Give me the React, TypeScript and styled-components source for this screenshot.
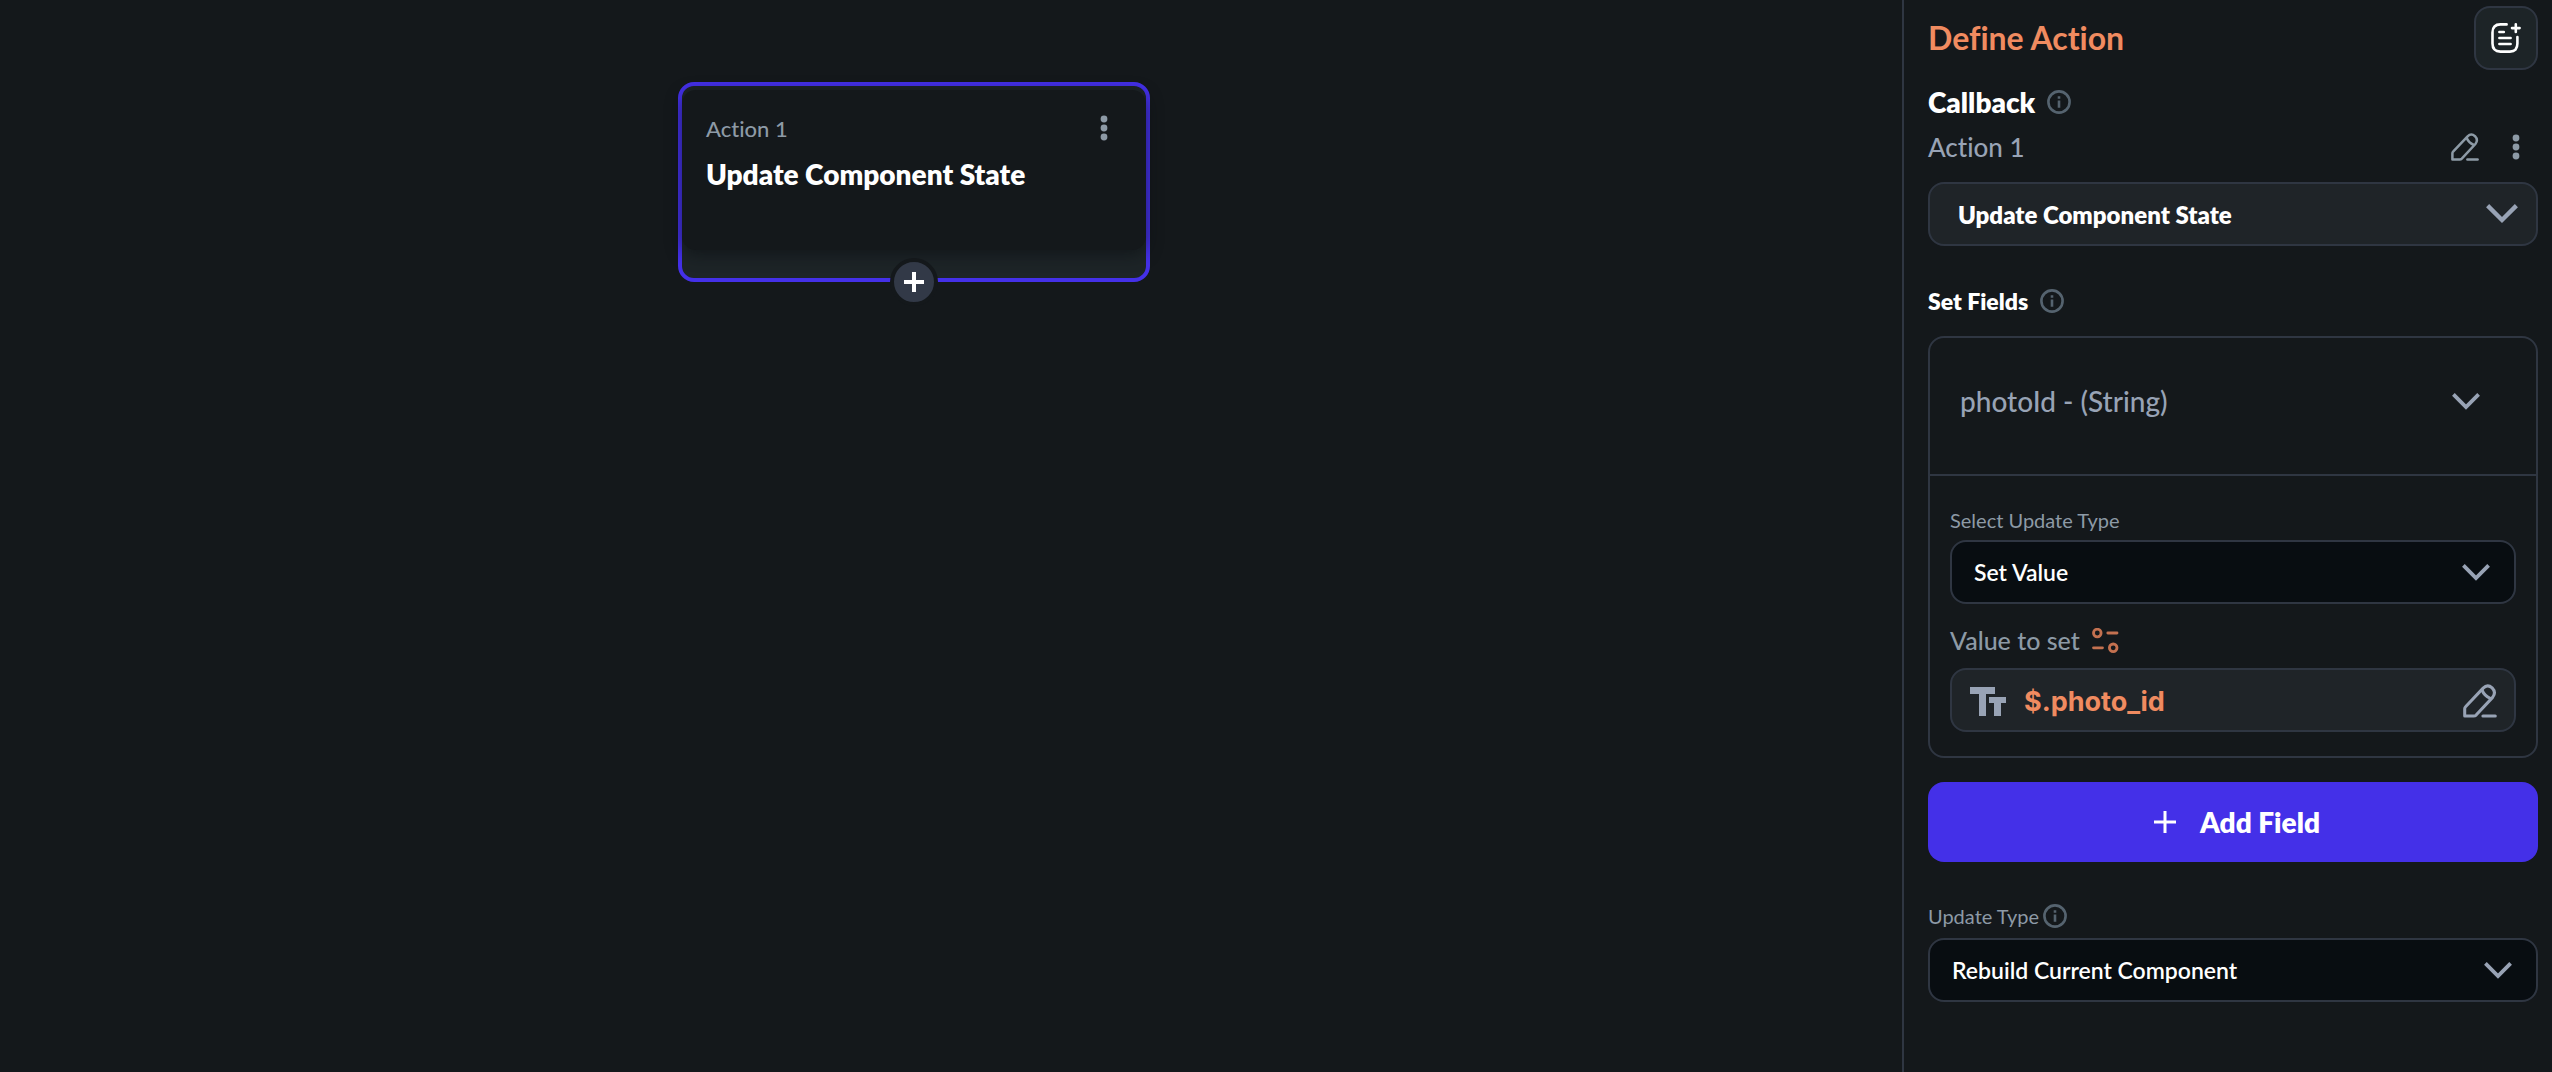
import React, { useState } from "react";
import styled, { createGlobalStyle } from "styled-components";

const color = {
  page: "#14181b",
  surface: "#1f2428",
  raised: "#1d2427",
  sunken: "#080d11",
  line: "#2f3642",
  white: "#ffffff",
  text: "#98a3b5",
  muted: "#8d9aa6",
  faint: "#55636f",
  purple: "#4430e8",
  orange: "#f08b60",
  rust: "#c47150",
};

const GlobalStyle = createGlobalStyle`
  * { box-sizing: border-box; }
  body {
    margin: 0;
    background: ${color.page};
    color: ${color.white};
    font-family: Lato, Roboto, sans-serif;
    font-variant-ligatures: none;
  }
  button, input, select { font-family: inherit; }
`;

const Layout = styled.div`
  display: flex;
  min-height: 100vh;
`;

const Canvas = styled.main`
  position: relative;
  flex: 1;
  min-width: 0;
`;

const Node = styled.article`
  position: absolute;
  left: 678px;
  top: 82px;
  width: 472px;
  height: 200px;
  padding-top: 4px;
  border: 4px solid ${color.purple};
  border-radius: 16px;
  background: ${color.raised};
`;

const NodeBody = styled.div`
  height: 160px;
  padding: 20px 24px;
  border-radius: 14px;
  background: ${color.page};
  box-shadow: 0 4px 16px rgba(10, 14, 17, 0.6);
`;

const Row = styled.div<{ $height: number; $gap?: number }>`
  display: flex;
  align-items: center;
  gap: ${(p) => p.$gap ?? 12}px;
  height: ${(p) => p.$height}px;
`;

const NodeHeader = styled(Row)`
  justify-content: space-between;
  padding-right: 14px;
`;

const NodeStep = styled.span`
  color: ${color.muted};
  font-size: 22px;
  font-weight: 500;
`;

const NodeTitle = styled.h3`
  margin: 8px 0 0;
  font-size: 28px;
  font-weight: 800;
  line-height: 40px;
`;

const NodeAdd = styled.button`
  position: absolute;
  left: 50%;
  bottom: -28px;
  display: grid;
  place-items: center;
  width: 48px;
  height: 48px;
  margin-left: -24px;
  padding: 0;
  border: 4px solid ${color.page};
  border-radius: 50%;
  background: #323947;
  color: ${color.white};
`;

const Panel = styled.aside`
  display: flex;
  flex-direction: column;
  width: 650px;
  padding: 6px 14px 24px 24px;
  border-left: 2px solid ${color.line};
`;

const PanelHeader = styled.header`
  display: flex;
  align-items: center;
  justify-content: space-between;
  margin-bottom: 16px;
`;

const PanelTitle = styled.h1`
  margin: 0;
  color: ${color.orange};
  font-size: 32px;
  font-weight: 700;
  line-height: 36px;
`;

const NotesButton = styled.button`
  display: grid;
  place-items: center;
  width: 64px;
  height: 64px;
  padding: 0;
  border: 2px solid ${color.line};
  border-radius: 16px;
  background: ${color.raised};
  color: ${color.white};
`;

const Heading = styled.h2<{ $size: number; $weight: number }>`
  margin: 0;
  font-size: ${(p) => p.$size}px;
  font-weight: ${(p) => p.$weight};
`;

const ActionRow = styled(Row)`
  justify-content: space-between;
  margin: 12px 0 18px;
`;

const ActionName = styled.span`
  color: ${color.text};
  font-size: 26px;
  font-weight: 500;
`;

const ActionTools = styled.div`
  display: flex;
  align-items: center;
  gap: 33px;
  padding-right: 18px;
`;

const IconButton = styled.button`
  display: grid;
  place-items: center;
  padding: 0;
  border: 0;
  background: none;
  color: ${color.muted};
`;

const ValueEdit = styled(IconButton)`
  color: ${color.text};
`;

const SectionRow = styled(Row)`
  margin: 40px 0 20px;
`;

const Field = styled.div`
  position: relative;
  display: flex;
  align-items: center;
`;

type Tone = "surface" | "sunken" | "plain";

const Select = styled.select<{ $tone: Tone; $size: number; $weight: number; $inset: number }>`
  appearance: none;
  width: 100%;
  height: 64px;
  padding: 0 60px 0 ${(p) => p.$inset}px;
  border: ${(p) => (p.$tone === "plain" ? "0" : `2px solid ${color.line}`)};
  border-radius: 16px;
  background: ${(p) => (p.$tone === "plain" ? "transparent" : color[p.$tone])};
  color: ${(p) => (p.$tone === "plain" ? color.text : color.white)};
  font-size: ${(p) => p.$size}px;
  font-weight: ${(p) => p.$weight};
`;

const Chevron = styled.svg<{ $right: number }>`
  position: absolute;
  right: ${(p) => p.$right}px;
  color: ${color.text};
  pointer-events: none;
`;

const FieldCard = styled.section`
  border: 2px solid ${color.line};
  border-radius: 16px;
`;

const FieldCardHead = styled.div`
  padding: 31px 0 41px;
  border-bottom: 2px solid ${color.line};
`;

const FieldCardBody = styled.div`
  padding: 32px 20px 24px;
`;

const SmallLabel = styled.label`
  display: block;
  color: ${color.muted};
  font-size: 20px;
  line-height: 24px;
`;

const TypeLabel = styled(SmallLabel)`
  margin-bottom: 8px;
`;

const ValueRow = styled(Row)`
  margin: 20px 0 12px;
`;

const ValueLabel = styled.label`
  color: ${color.muted};
  font-size: 25px;
  font-weight: 500;
`;

const ValueBox = styled.div`
  display: flex;
  align-items: center;
  gap: 18px;
  height: 64px;
  padding: 2px 17px 0 18px;
  border: 2px solid ${color.line};
  border-radius: 16px;
  background: ${color.surface};
  color: ${color.text};
`;

const ValueInput = styled.input`
  flex: 1;
  min-width: 0;
  padding: 0;
  border: 0;
  background: none;
  color: ${color.orange};
  font-family: Inter, sans-serif;
  font-size: 27px;
  font-weight: 700;
`;

const AddButton = styled.button`
  display: flex;
  align-items: center;
  justify-content: center;
  gap: 24px;
  height: 80px;
  margin: 24px 0 40px;
  padding: 0 0 0 8px;
  border: 0;
  border-radius: 16px;
  background: ${color.purple};
  color: ${color.white};
  font-size: 28px;
  font-weight: 800;
`;

const UpdateRow = styled(Row)`
  margin-bottom: 8px;
`;

const Plus = ({ size, stroke }: { size: number; stroke: number }) => (
  <svg width={size} height={size} viewBox={`0 0 ${size} ${size}`} stroke="currentColor" strokeWidth={stroke} aria-hidden>
    <path d={`M${size / 2} 0V${size}M0 ${size / 2}H${size}`} />
  </svg>
);

const Info = () => (
  <svg width="24" height="24" viewBox="0 0 24 24" fill="none" stroke={color.faint} strokeWidth="2.6" aria-hidden>
    <circle cx="12" cy="12" r="10.6" />
    <path d="M12 10.6V17.8M12 6.2V8.8" />
  </svg>
);

const Dots = () => (
  <svg width="8" height="26" viewBox="0 0 8 26" fill="currentColor" aria-hidden>
    <circle cx="4" cy="4" r="3.4" />
    <circle cx="4" cy="13" r="3.4" />
    <circle cx="4" cy="22" r="3.4" />
  </svg>
);

const Pencil = ({ size }: { size: number }) => (
  <svg width={size} height={size} viewBox="0 0 28 28" fill="none" stroke="currentColor" strokeWidth="2.5" strokeLinecap="round" strokeLinejoin="round" aria-hidden>
    <path d="M1.4 26.4V20.4Q1.4 19.4 2.1 18.7L16.6 3.4Q20.2 -.2 24 3.2Q27.6 7 24.4 11L10.8 25.6Q10 26.4 8.8 26.4Z" />
    <path d="M15.6 4.8Q17.6 9.8 22.8 12" />
    <path d="M16.4 26.4H26.6" />
  </svg>
);

const Notes = () => (
  <svg width="30" height="30" viewBox="0 0 30 30" fill="none" stroke="currentColor" strokeWidth="2.6" strokeLinecap="round" aria-hidden>
    <path d="M15.6 1.4H9.4Q1.5 1.4 1.5 9.4V20.6Q1.5 28.6 9.4 28.6H19Q26.4 28.6 26.4 20.6V14" />
    <path d="M8.4 9H12.8M8.4 15H19.6M8.4 21H19.6" />
    <path d="M24.8 1.3V8.9M21 5.1H28.6" />
  </svg>
);

const Binding = () => (
  <svg width="27" height="25" viewBox="0 0 27 25" fill="none" stroke={color.rust} strokeWidth="2.8" strokeLinecap="round" aria-hidden>
    <circle cx="5.3" cy="5" r="3.8" />
    <circle cx="21.2" cy="19.8" r="3.8" />
    <path d="M15.8 5H25M1.5 19.8H10.5" />
  </svg>
);

const TextType = () => (
  <svg width="36" height="29" viewBox="0 0 36 29" fill="currentColor" aria-hidden>
    <path d="M0 0H25V7H16V29H9V7H0Z" />
    <path d="M19 10H36V16H31V29H24V16H19Z" />
  </svg>
);

interface PickProps {
  id: string;
  label?: string;
  options: string[];
  tone: Tone;
  size: number;
  weight: number;
  inset: number;
  chevronRight: number;
  chevronWidth?: number;
}

function Pick({ id, label, options, tone, size, weight, inset, chevronRight, chevronWidth = 28 }: PickProps) {
  return (
    <Field>
      <Select id={id} aria-label={label} $tone={tone} $size={size} $weight={weight} $inset={inset}>
        {options.map((o) => (
          <option key={o}>{o}</option>
        ))}
      </Select>
      <Chevron $right={chevronRight} width={chevronWidth} viewBox="0 0 28 17" fill="none" stroke="currentColor" strokeWidth="3.8" aria-hidden>
        <path d="M1.4 1.4L14 14L26.6 1.4" />
      </Chevron>
    </Field>
  );
}

export default function App() {
  const [value, setValue] = useState("$.photo_id");
  return (
    <>
      <GlobalStyle />
      <Layout>
        <Canvas>
          <Node>
            <NodeBody>
              <NodeHeader $height={36}>
                <NodeStep>Action 1</NodeStep>
                <IconButton aria-label="Action menu">
                  <Dots />
                </IconButton>
              </NodeHeader>
              <NodeTitle>Update Component State</NodeTitle>
            </NodeBody>
            <NodeAdd aria-label="Add action">
              <Plus size={20} stroke={4} />
            </NodeAdd>
          </Node>
        </Canvas>

        <Panel>
          <PanelHeader>
            <PanelTitle>Define Action</PanelTitle>
            <NotesButton aria-label="Add note">
              <Notes />
            </NotesButton>
          </PanelHeader>

          <Row $height={32}>
            <Heading $size={28} $weight={800}>Callback</Heading>
            <Info />
          </Row>
          <ActionRow $height={34}>
            <ActionName>Action 1</ActionName>
            <ActionTools>
              <IconButton aria-label="Rename action">
                <Pencil size={28} />
              </IconButton>
              <IconButton aria-label="More options">
                <Dots />
              </IconButton>
            </ActionTools>
          </ActionRow>
          <Pick id="action" label="Action type" options={["Update Component State"]} tone="surface" size={24} weight={800} inset={28} chevronRight={20} chevronWidth={32} />

          <SectionRow $height={30}>
            <Heading $size={23} $weight={800}>Set Fields</Heading>
            <Info />
          </SectionRow>

          <FieldCard>
            <FieldCardHead>
              <Pick id="field" label="Field" options={["photoId - (String)"]} tone="plain" size={28} weight={500} inset={30} chevronRight={56} />
            </FieldCardHead>
            <FieldCardBody>
              <TypeLabel htmlFor="set-type">Select Update Type</TypeLabel>
              <Pick id="set-type" options={["Set Value"]} tone="sunken" size={23} weight={600} inset={22} chevronRight={26} />
              <ValueRow $height={32}>
                <ValueLabel htmlFor="value">Value to set</ValueLabel>
                <Binding />
              </ValueRow>
              <ValueBox>
                <TextType />
                <ValueInput id="value" value={value} onChange={(e) => setValue(e.target.value)} />
                <ValueEdit aria-label="Edit value">
                  <Pencil size={34} />
                </ValueEdit>
              </ValueBox>
            </FieldCardBody>
          </FieldCard>

          <AddButton>
            <Plus size={22} stroke={3} />
            Add Field
          </AddButton>

          <UpdateRow $height={28} $gap={4}>
            <SmallLabel htmlFor="update-type">Update Type</SmallLabel>
            <Info />
          </UpdateRow>
          <Pick id="update-type" options={["Rebuild Current Component"]} tone="sunken" size={23} weight={600} inset={22} chevronRight={26} />
        </Panel>
      </Layout>
    </>
  );
}
